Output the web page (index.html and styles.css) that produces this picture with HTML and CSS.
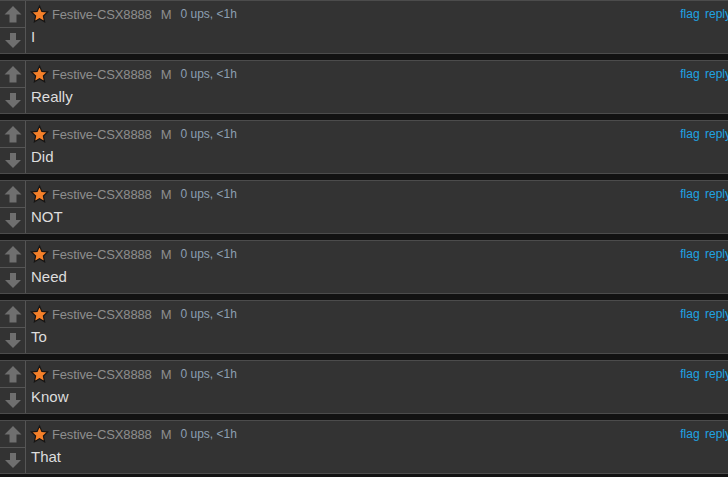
FILE: index.html
```html
<!DOCTYPE html>
<html lang="en">
<head>
    <meta charset="UTF-8">
    <title>Comments</title>
    <link rel="stylesheet" href="styles.css">
</head>
<body>
    <div class="comments" id="comments"></div>

    <template id="commentTpl">
        <div class="comment">
            <div class="votes">
                <div class="vote">
                    <svg width="18" height="17" viewBox="0 0 18 17"><path d="M9 0 L17.5 8.5 L12.5 8.5 L12.5 16.5 L5.5 16.5 L5.5 8.5 L0.5 8.5 Z" fill="#6f6f6f"/></svg>
                </div>
                <div class="vote">
                    <svg width="18" height="16" viewBox="0 0 18 16"><path d="M6 0 L12 0 L12 7 L17 7 L9 15 L1 7 L6 7 Z" fill="#6f6f6f"/></svg>
                </div>
            </div>
            <div class="body">
                <div class="head">
                    <svg class="star" width="17" height="18" viewBox="0 0 17 17"><path d="M8.5 0.6 L10.9 5.9 L16.6 6.5 L12.4 10.5 L13.6 16.2 L8.5 13.3 L3.4 16.2 L4.6 10.5 L0.4 6.5 L6.1 5.9 Z" fill="#f5802a" stroke="#151515" stroke-width="1.2" stroke-linejoin="miter"/></svg>
                    <span class="user">Festive-CSX8888</span>
                    <span class="badge">M</span>
                    <span class="meta">0 ups, &lt;1h</span>
                    <span class="links"><a>flag</a> <a>reply</a></span>
                </div>
                <div class="text"></div>
            </div>
        </div>
    </template>

    <script>
        // one word per comment
        const words = ['I', 'Really', 'Did', 'NOT', 'Need', 'To', 'Know', 'That'];
        const tpl = document.getElementById('commentTpl');
        const list = document.getElementById('comments');
        words.forEach(w => {
            const node = tpl.content.cloneNode(true);
            node.querySelector('.text').textContent = w;
            list.appendChild(node);
        });
    </script>
</body>
</html>
```

FILE: styles.css
```css
html {
    overflow: hidden;
}

body {
    margin: 0;
    background: #121212;
    font-family: "Liberation Sans", Arial, sans-serif;
}

.comment {
    display: flex;
    background: #333;
    border-top: 1px solid #4c4c4c;
    border-bottom: 1px solid #4c4c4c;
    margin-bottom: 6px;
}

/* vote column */
.votes {
    width: 25px;
    flex-shrink: 0;
    border-right: 1px solid #555;
    display: flex;
    flex-direction: column;
}

.vote {
    height: 26px;
    display: flex;
    align-items: center;
    justify-content: center;
}

.vote + .vote {
    height: 25px;
    border-top: 1px solid #555;
}

.vote svg {
    display: block;
}

/* comment body */
.body {
    flex: 1;
    padding-left: 5px;
}

.head {
    display: flex;
    align-items: center;
    height: 18px;
    margin-top: 4px;
    white-space: nowrap;
}

.star {
    display: block;
    margin-right: 4px;
    overflow: visible;
}

.user {
    font-size: 13px;
    color: #8e8e8e;
    letter-spacing: -0.15px;
}

.badge {
    font-size: 13px;
    color: #8e8e8e;
    margin-left: 9px;
}

.meta {
    font-size: 12px;
    color: #8c9fb2;
    margin-left: 9px;
}

.links {
    margin-left: auto;
    margin-right: -3px;
    font-size: 12px;
}

.links a {
    color: #1fa3e3;
}

.links a + a {
    margin-left: 2px;
}

.text {
    font-size: 15px;
    line-height: 18px;
    color: #ddd;
    margin-top: 5px;
    height: 25px;
}
```
